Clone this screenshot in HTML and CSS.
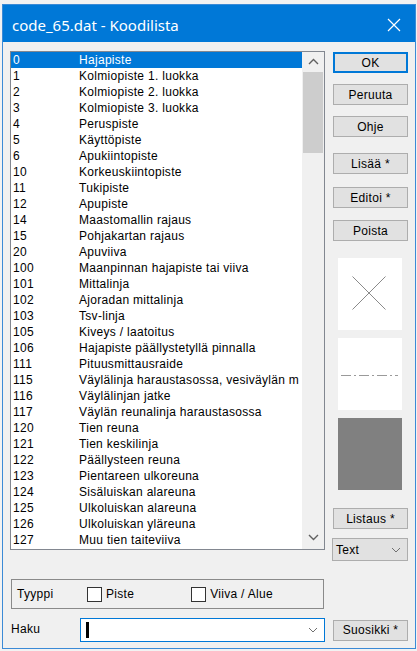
FILE: index.html
```html
<!DOCTYPE html>
<html lang="fi">
<head>
<meta charset="utf-8">
<title>code_65.dat - Koodilista</title>
<link rel="stylesheet" href="styles.css">
</head>
<body>
<div class="window">
  <div class="titlebar">
    <span class="title">code_65.dat - Koodilista</span>
    <svg class="close" width="14" height="14" viewBox="0 0 14 14"><path d="M1 1 L13 13 M13 1 L1 13" stroke="#ffffff" stroke-width="1.2" fill="none"/></svg>
  </div>
  <div class="client">
    <div class="top">
      <div class="left">
        <div class="listbox">
          <div class="rows">
            <div class="row selected"><span class="code">0</span><span class="name">Hajapiste</span></div>
            <div class="row"><span class="code">1</span><span class="name">Kolmiopiste 1. luokka</span></div>
            <div class="row"><span class="code">2</span><span class="name">Kolmiopiste 2. luokka</span></div>
            <div class="row"><span class="code">3</span><span class="name">Kolmiopiste 3. luokka</span></div>
            <div class="row"><span class="code">4</span><span class="name">Peruspiste</span></div>
            <div class="row"><span class="code">5</span><span class="name">Käyttöpiste</span></div>
            <div class="row"><span class="code">6</span><span class="name">Apukiintopiste</span></div>
            <div class="row"><span class="code">10</span><span class="name">Korkeuskiintopiste</span></div>
            <div class="row"><span class="code">11</span><span class="name">Tukipiste</span></div>
            <div class="row"><span class="code">12</span><span class="name">Apupiste</span></div>
            <div class="row"><span class="code">14</span><span class="name">Maastomallin rajaus</span></div>
            <div class="row"><span class="code">15</span><span class="name">Pohjakartan rajaus</span></div>
            <div class="row"><span class="code">20</span><span class="name">Apuviiva</span></div>
            <div class="row"><span class="code">100</span><span class="name">Maanpinnan hajapiste tai viiva</span></div>
            <div class="row"><span class="code">101</span><span class="name">Mittalinja</span></div>
            <div class="row"><span class="code">102</span><span class="name">Ajoradan mittalinja</span></div>
            <div class="row"><span class="code">103</span><span class="name">Tsv-linja</span></div>
            <div class="row"><span class="code">105</span><span class="name">Kiveys / laatoitus</span></div>
            <div class="row"><span class="code">106</span><span class="name">Hajapiste päällystetyllä pinnalla</span></div>
            <div class="row"><span class="code">111</span><span class="name">Pituusmittausraide</span></div>
            <div class="row"><span class="code">115</span><span class="name">Väylälinja haraustasossa, vesiväylän m</span></div>
            <div class="row"><span class="code">116</span><span class="name">Väylälinjan jatke</span></div>
            <div class="row"><span class="code">117</span><span class="name">Väylän reunalinja haraustasossa</span></div>
            <div class="row"><span class="code">120</span><span class="name">Tien reuna</span></div>
            <div class="row"><span class="code">121</span><span class="name">Tien keskilinja</span></div>
            <div class="row"><span class="code">122</span><span class="name">Päällysteen reuna</span></div>
            <div class="row"><span class="code">123</span><span class="name">Pientareen ulkoreuna</span></div>
            <div class="row"><span class="code">124</span><span class="name">Sisäluiskan alareuna</span></div>
            <div class="row"><span class="code">125</span><span class="name">Ulkoluiskan alareuna</span></div>
            <div class="row"><span class="code">126</span><span class="name">Ulkoluiskan yläreuna</span></div>
            <div class="row"><span class="code">127</span><span class="name">Muu tien taiteviiva</span></div>
          </div>
          <div class="vscroll">
            <div class="sb-btn sb-up"><svg width="11" height="7" viewBox="0 0 11 7"><path d="M1 6 L5.5 1.5 L10 6" stroke="#606060" stroke-width="1.4" fill="none"/></svg></div>
            <div class="sb-track"><div class="sb-thumb"></div></div>
            <div class="sb-btn sb-down"><svg width="11" height="7" viewBox="0 0 11 7"><path d="M1 1 L5.5 5.5 L10 1" stroke="#606060" stroke-width="1.4" fill="none"/></svg></div>
          </div>
        </div>
        <div class="group">
          <span class="group-label">Tyyppi</span>
          <span class="check check-piste"></span><span class="check-label">Piste</span>
          <span class="check check-viiva"></span><span class="check-label">Viiva / Alue</span>
        </div>
      </div>
      <div class="right">
        <button class="btn btn-default">OK</button>
        <button class="btn btn-peruuta">Peruuta</button>
        <button class="btn btn-ohje">Ohje</button>
        <button class="btn btn-lisaa">Lisää *</button>
        <button class="btn btn-editoi">Editoi *</button>
        <button class="btn btn-poista">Poista</button>
        <div class="preview preview-point">
          <svg width="64" height="72" viewBox="0 0 64 72"><path d="M14.5 18.5 L47.5 51.5 M47.5 18.5 L14.5 51.5" stroke="#8a8a8a" stroke-width="1" fill="none"/></svg>
        </div>
        <div class="preview preview-line">
          <svg width="64" height="72" viewBox="0 0 64 72"><line x1="3" y1="37.5" x2="60" y2="37.5" stroke="#9a9a9a" stroke-width="1" stroke-dasharray="10 3 2 3"/></svg>
        </div>
        <div class="preview preview-area"></div>
        <button class="btn btn-listaus">Listaus *</button>
        <div class="dropdown">
          <span>Text</span>
          <svg width="10" height="6" viewBox="0 0 10 6"><path d="M1 1 L5 5 L9 1" stroke="#707070" stroke-width="1" fill="none"/></svg>
        </div>
      </div>
    </div>
    <div class="bottom">
      <span class="haku-label">Haku</span>
      <div class="combo">
        <span class="caret"></span>
        <svg width="10" height="6" viewBox="0 0 10 6"><path d="M1 1 L5 5 L9 1" stroke="#707070" stroke-width="1" fill="none"/></svg>
      </div>
      <button class="btn btn-suosikki">Suosikki *</button>
    </div>
  </div>
</div>
</body>
</html>
```
FILE: styles.css
```css
html, body {
  margin: 0;
  padding: 0;
  background: #f2f2f2;
}
body {
  font-family: "Liberation Sans", Arial, sans-serif;
  font-size: 12px;
  color: #000;
}
.window {
  box-sizing: border-box;
  margin: 4px 0 0 2px;
  width: 414px;
  height: 645px;
  border: 1px solid #3b8ad6;
  background: #f0f0f0;
  display: flex;
  flex-direction: column;
}
.titlebar {
  height: 37px;
  flex: none;
  background: #0078d7;
  display: flex;
  align-items: center;
  justify-content: space-between;
  padding: 0 14px 0 9px;
}
.title {
  font-family: "Noto Sans", "Open Sans", sans-serif;
  font-size: 15px;
  color: #ffffff;
  padding-top: 2px;
}
.close {
  display: block;
  margin-top: 2px;
}
.client {
  padding: 9px 6px 0 7px;
  display: flex;
  flex-direction: column;
}
.top {
  display: flex;
  gap: 8px;
}
.left {
  width: 315px;
  display: flex;
  flex-direction: column;
}
.listbox {
  box-sizing: border-box;
  height: 499px;
  border: 1px solid #828790;
  background: #ffffff;
  display: flex;
}
.rows {
  width: 291px;
  overflow: hidden;
}
.row {
  height: 16px;
  line-height: 16px;
  display: flex;
  white-space: nowrap;
  letter-spacing: 0.3px;
}
.row.selected {
  background: #0078d7;
  color: #ffffff;
}
.code {
  width: 66px;
  flex: none;
  padding-left: 2px;
}
.vscroll {
  width: 22px;
  background: #f0f0f0;
  display: flex;
  flex-direction: column;
}
.sb-btn {
  height: 17px;
  display: flex;
  align-items: center;
  justify-content: center;
  flex: none;
}
.sb-up svg { margin-top: 1px; }
.sb-down svg { margin-bottom: 6px; }
.sb-track {
  flex: 1;
  padding: 3px 1px 0 1px;
}
.sb-thumb {
  height: 81px;
  background: #cdcdcd;
}
.group {
  box-sizing: border-box;
  margin: 29px 0 0 1px;
  width: 313px;
  height: 30px;
  border: 1px solid #8a8a8a;
  display: flex;
  align-items: center;
}
.group-label {
  margin-left: 5px;
  width: 70px;
  letter-spacing: 0.3px;
}
.check {
  box-sizing: border-box;
  width: 15px;
  height: 15px;
  border: 1px solid #333333;
  background: #ffffff;
  flex: none;
}
.check-label {
  margin-left: 4px;
  letter-spacing: 0.3px;
}
.check-viiva {
  margin-left: 57px;
}
.right {
  width: 75px;
  display: flex;
  flex-direction: column;
}
.btn {
  box-sizing: border-box;
  width: 75px;
  height: 21px;
  margin: 0;
  padding: 0;
  border: 1px solid #adadad;
  background: #e1e1e1;
  font-family: "Liberation Sans", Arial, sans-serif;
  font-size: 12px;
  letter-spacing: 0.3px;
  color: #000;
  flex: none;
}
.btn-default {
  margin-top: 1px;
  border-color: #0078d7;
  box-shadow: inset 0 0 0 1px #0078d7;
}
.btn-peruuta { margin-top: 11px; }
.btn-ohje { margin-top: 11px; }
.btn-lisaa { margin-top: 16px; }
.btn-editoi { margin-top: 13px; }
.btn-poista { margin-top: 12px; }
.preview {
  width: 64px;
  height: 72px;
  margin-left: 5px;
  background: #ffffff;
  flex: none;
}
.preview svg { display: block; }
.preview-point { margin-top: 17px; }
.preview-line { margin-top: 8px; }
.preview-area {
  margin-top: 8px;
  background: #808080;
}
.btn-listaus { margin-top: 18px; }
.dropdown {
  box-sizing: border-box;
  margin-top: 9px;
  width: 76px;
  margin-left: -1px;
  height: 23px;
  border: 1px solid #adadad;
  background: #e1e1e1;
  display: flex;
  align-items: center;
  justify-content: space-between;
  padding: 0 6px 0 3px;
  letter-spacing: 0.3px;
}
.dropdown svg { display: block; }
.bottom {
  margin-top: 9px;
  display: flex;
  align-items: center;
}
.haku-label {
  width: 69px;
  margin-left: 1px;
  padding-bottom: 3px;
  letter-spacing: 0.3px;
}
.combo {
  box-sizing: border-box;
  width: 245px;
  height: 24px;
  border: 1px solid #0078d7;
  background: #ffffff;
  display: flex;
  align-items: center;
  justify-content: space-between;
  padding: 0 6px 0 5px;
}
.caret {
  width: 3px;
  height: 16px;
  background: #000;
}
.combo svg { display: block; }
.btn-suosikki {
  margin-left: 8px;
}
```
